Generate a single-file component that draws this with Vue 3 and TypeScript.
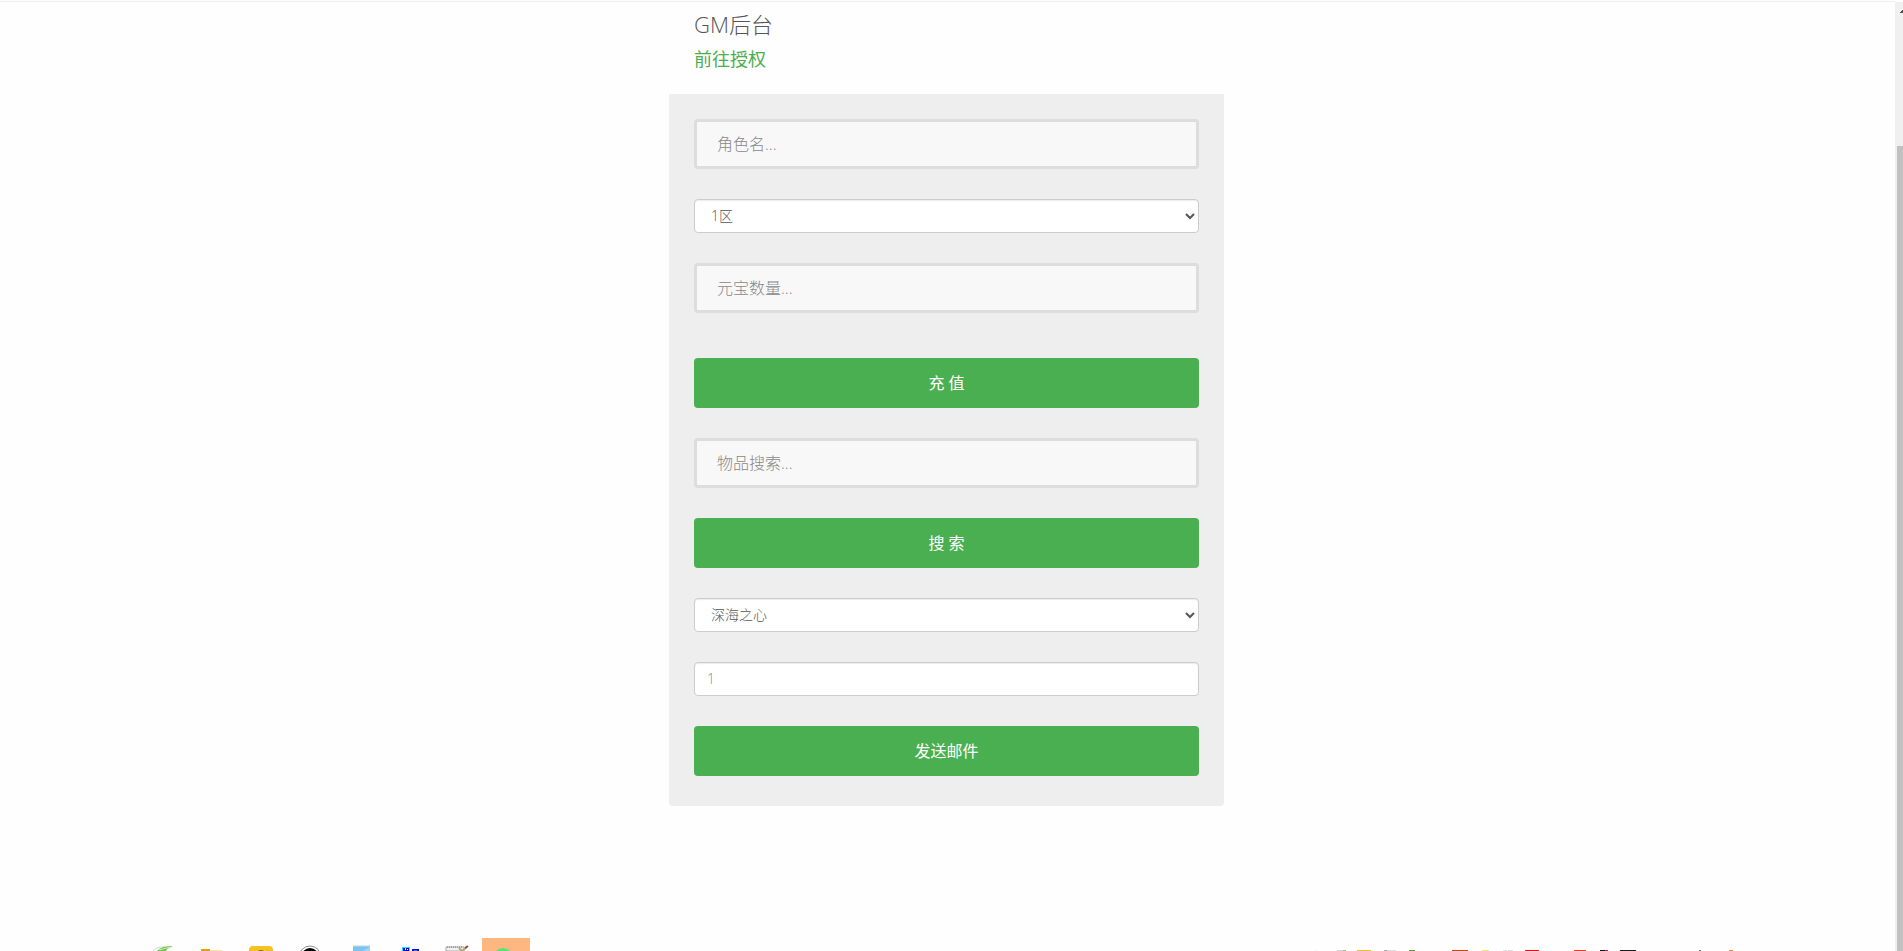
<script setup lang="ts">
import { ref } from 'vue'

interface TrayMark {
  x: number
  width: number
  color: string
}

const roleName = ref('')
const zone = ref('1区')
const amount = ref('')
const keyword = ref('')
const item = ref('深海之心')
const count = ref('')

const zones: string[] = ['1区']
const items: string[] = ['深海之心']

const trayMarks: TrayMark[] = [
  { x: 0, width: 4, color: '#f5f5f5' },
  { x: 23, width: 7, color: '#d4d6d2' },
  { x: 29, width: 3, color: '#8fc07c' },
  { x: 43, width: 14, color: '#efc22a' },
  { x: 70, width: 3, color: '#a9a9a9' },
  { x: 73, width: 9, color: '#dddddd' },
  { x: 95, width: 6, color: '#5e9a35' },
  { x: 138, width: 16, color: '#bd4b12' },
  { x: 168, width: 5, color: '#f5e56c' },
  { x: 173, width: 2, color: '#bfe6e4' },
  { x: 189, width: 4, color: '#e5e5e5' },
  { x: 194, width: 5, color: '#dcdcdc' },
  { x: 211, width: 14, color: '#dc1414' },
  { x: 260, width: 12, color: '#e3441c' },
  { x: 286, width: 5, color: '#111111' },
  { x: 291, width: 3, color: '#d01690' },
  { x: 306, width: 16, color: '#1b1b1b' },
  { x: 385, width: 2, color: '#6d6d6d' },
  { x: 415, width: 4, color: '#ef8440' },
]
</script>

<template>
  <div class="screen">
    <main class="page">
      <div class="column">
        <header class="heading">
          <h3>GM后台</h3>
          <a href="#">前往授权</a>
        </header>
        <form class="panel" @submit.prevent>
          <input v-model="roleName" class="field" type="text" placeholder="角色名..." aria-label="角色名" />
          <select v-model="zone" class="control" aria-label="区">
            <option v-for="z in zones" :key="z">{{ z }}</option>
          </select>
          <input v-model="amount" class="field" type="text" placeholder="元宝数量..." aria-label="元宝数量" />
          <button class="btn spaced" type="button">充 值</button>
          <input v-model="keyword" class="field" type="text" placeholder="物品搜索..." aria-label="物品搜索" />
          <button class="btn" type="button">搜 索</button>
          <select v-model="item" class="control" aria-label="物品">
            <option v-for="i in items" :key="i">{{ i }}</option>
          </select>
          <input v-model="count" class="control" type="text" placeholder="1" aria-label="数量" />
          <button class="btn" type="button">发送邮件</button>
        </form>
      </div>
    </main>

    <aside class="scrollbar">
      <svg class="arrow" width="8" height="12" viewBox="0 0 8 12" shape-rendering="crispEdges">
        <path d="M5 11V10H6V9H7V8H8V11Z" fill="#505050" />
      </svg>
      <div class="thumb"></div>
    </aside>

    <footer class="taskbar">
      <div class="apps">
        <div class="app">
          <svg width="48" height="13" viewBox="0 0 48 13">
            <path d="M14 13Q18 8 27 9" fill="none" stroke="#ccd9df" stroke-width="1" />
            <path d="M18 13Q22 8 34 8L28 11L27 13Z" fill="#6cc644" />
            <path d="M20 12L31 9" stroke="#c9efb5" stroke-width="1" />
          </svg>
        </div>
        <div class="app">
          <svg width="48" height="13" viewBox="0 0 48 13">
            <path d="M13 11H22V13H13Z" fill="#e3a008" />
            <path d="M22 12H34V13H22Z" fill="#fbe29a" />
          </svg>
        </div>
        <div class="app">
          <svg width="48" height="13" viewBox="0 0 48 13">
            <rect x="12" y="8" width="24" height="22" rx="4" fill="#f5c224" />
            <path d="M21 13Q24 11 27 13Z" fill="#8d6e1b" />
          </svg>
        </div>
        <div class="app">
          <svg width="48" height="13" viewBox="0 0 48 13">
            <circle cx="24" cy="19" r="11" fill="#fff" stroke="#8d8d8d" stroke-width="1" />
            <circle cx="24" cy="19" r="9" fill="#000" />
          </svg>
        </div>
        <div class="app">
          <svg width="48" height="13" viewBox="0 0 48 13">
            <rect x="18" y="8" width="17" height="5" fill="#7cc3ee" />
            <path d="M18 8H35" stroke="#c5d5dd" stroke-width="1" />
            <path d="M27 13L35 9V13Z" fill="#9bd4f5" />
          </svg>
        </div>
        <div class="app">
          <svg width="48" height="13" viewBox="0 0 48 13" shape-rendering="crispEdges">
            <rect x="18" y="9" width="8" height="4" fill="#23dcf5" />
            <rect x="19" y="10" width="6" height="3" fill="#0012c8" />
            <rect x="28" y="11" width="7" height="2" fill="#0909d8" />
            <path d="M21 10H22V12H21ZM23 11H24V12H23Z" fill="#d9f7ff" />
            <path d="M30 12H33V13H30Z" fill="#4b6bf0" />
          </svg>
        </div>
        <div class="app">
          <svg width="48" height="13" viewBox="0 0 48 13">
            <path d="M13 13V9H31V13Z" fill="#f1f1f1" stroke="#aaa" />
            <path d="M14 9H30" stroke="#777" stroke-dasharray="1 1" />
            <path d="M26 10L29 13L34 9" fill="none" stroke="#b6a878" stroke-width="2" />
            <path d="M32 10L35 8" stroke="#a44545" stroke-width="2" />
          </svg>
        </div>
        <div class="app active">
          <svg width="48" height="13" viewBox="0 0 48 13">
            <circle cx="21" cy="20" r="10" fill="#55e676" />
          </svg>
        </div>
      </div>
      <svg class="tray" width="420" height="1" viewBox="0 0 420 1" shape-rendering="crispEdges">
        <rect v-for="mark in trayMarks" :key="mark.x" :x="mark.x" y="0" :width="mark.width" height="1" :fill="mark.color" />
      </svg>
    </footer>
  </div>
</template>

<style>
body {
  margin: 0;
  background: #fefefe;
}
</style>

<style scoped>
.screen {
  box-sizing: border-box;
  display: grid;
  grid-template: 1fr 13px / 1fr 8px;
  min-height: 100vh;
  padding-top: 1px;
  font-family: "Open Sans", "Noto Sans CJK SC", sans-serif;
  font-weight: 300;
  color: #555;
  overflow: hidden;
}
*,
*::before {
  box-sizing: border-box;
}
.page {
  border-top: 1px solid #eee;
  padding-right: 2px;
}
.column {
  width: 100%;
  max-width: 555px;
  margin: 0 auto;
}
.heading {
  padding: 7px 25px 18px;
}
h3 {
  margin: 0 0 3px;
  font-size: 22px;
  font-weight: 300;
  line-height: 30px;
}
.heading a {
  display: block;
  font-size: 18px;
  font-weight: 400;
  line-height: 34px;
  color: #4aaf51;
  text-decoration: none;
}
.panel {
  display: flex;
  flex-direction: column;
  gap: 30px;
  padding: 25px 25px 30px;
  background: #eee;
  border-radius: 0 0 4px 4px;
}
.field,
.control,
.btn {
  width: 100%;
  margin: 0;
  font-family: inherit;
  border-radius: 4px;
}
.field {
  height: 50px;
  padding: 0 20px;
  background: #f8f8f8;
  border: 3px solid #ddd;
  font-size: 16px;
  font-weight: 300;
  color: #888;
}
.control {
  height: 34px;
  padding: 5px 12px 7px;
  background: #fff;
  border: 1px solid #ccc;
  box-shadow: inset 0 1px 1px rgba(0, 0, 0, 0.075);
  font-size: 14px;
  font-weight: 300;
  color: #555;
}
.field::placeholder {
  color: #888;
}
.control::placeholder {
  color: #888;
}
.btn {
  height: 50px;
  padding: 0 20px 2px;
  border: 0;
  background: #4aaf51;
  font-size: 16px;
  font-weight: 400;
  color: #fff;
  cursor: pointer;
}
.spaced {
  margin-top: 15px;
}
.scrollbar {
  grid-row: 1 / 3;
  grid-column: 2;
  display: flex;
  flex-direction: column;
  margin-top: 1px;
  background: #f0f0f0;
}
.arrow {
  margin-bottom: 132px;
}
.thumb {
  flex: 1;
  margin-left: 2px;
  background: #c1c1c1;
}
.taskbar {
  grid-row: 2;
  grid-column: 1;
  display: flex;
  justify-content: space-between;
  align-items: flex-end;
  padding: 0 161px 0 139px;
}
.apps {
  display: flex;
  gap: 1px;
}
.app {
  width: 48px;
  height: 13px;
}
.app svg {
  display: block;
}
.active {
  background: #ffb782;
}
</style>
